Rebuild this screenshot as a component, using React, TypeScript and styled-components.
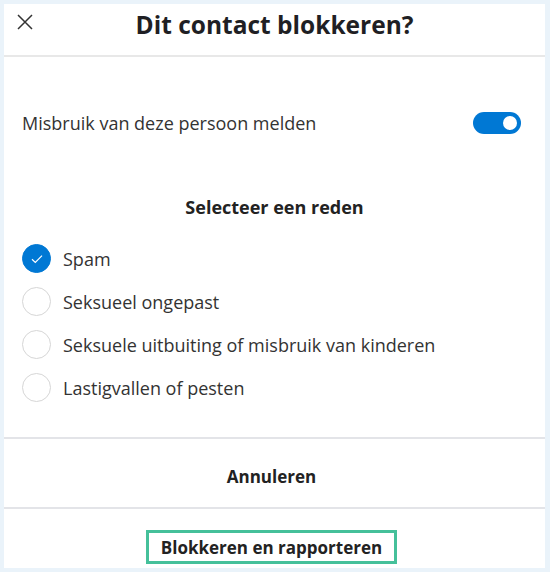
import styled, { createGlobalStyle } from "styled-components";

const GlobalStyle = createGlobalStyle`
  body {
    margin: 0;
    background: #eaf3fa;
    font-family: "Open Sans", "Noto Sans", Arial, sans-serif;
  }
`;

const reasons = [
  "Spam",
  "Seksueel ongepast",
  "Seksuele uitbuiting of misbruik van kinderen",
  "Lastigvallen of pesten",
];

const App = () => {
  return (
    <>
      <GlobalStyle />
      <Panel>
        <Header>
          <Close aria-label="Sluiten">
            <svg width="16" height="16" viewBox="0 0 16 16">
              <path d="M1 1 L15 15 M15 1 L1 15" stroke="#333" strokeWidth="1.5" fill="none" />
            </svg>
          </Close>
          <Title>Dit contact blokkeren?</Title>
        </Header>
        <Body>
          <ToggleRow>
            <Label>Misbruik van deze persoon melden</Label>
            <Switch $on />
          </ToggleRow>
          <SectionTitle>Selecteer een reden</SectionTitle>
          <List>
            {reasons.map((r, i) => (
              <Option key={r}>
                <Radio $checked={i === 0}>
                  {i === 0 && (
                    <svg width="12" height="10" viewBox="0 0 12 10">
                      <path d="M1 5.2 L4.3 8.4 L11 1.6" stroke="#fff" strokeWidth="1.2" fill="none" />
                    </svg>
                  )}
                </Radio>
                <Label>{r}</Label>
              </Option>
            ))}
          </List>
        </Body>
        <Action>
          <ActionText>Annuleren</ActionText>
        </Action>
        <Footer>
          <Primary>Blokkeren en rapporteren</Primary>
        </Footer>
      </Panel>
    </>
  );
};

export default App;

const Panel = styled.div`
  margin: 4px 5px 4px 4px;
  height: 564px;
  background: #fff;
  display: flex;
  flex-direction: column;
`;
const Header = styled.div`
  height: 51px;
  border-bottom: 2px solid #e8e8e8;
  display: flex;
  align-items: center;
  justify-content: center;
  position: relative;
`;
const Close = styled.div`
  position: absolute;
  left: 13px;
  top: 10px;
  width: 16px;
  height: 16px;
  display: flex;
`;
const Title = styled.div`
  font-size: 24.5px;
  font-weight: 700;
  color: #1f1f24;
  margin-top: -10px;
`;
const Body = styled.div`
  flex: 1;
  padding: 50px 24px 0 18px;
  border-bottom: 2px solid #e3e4e8;
`;
const ToggleRow = styled.div`
  display: flex;
  align-items: center;
  justify-content: space-between;
  height: 32px;
`;
const Label = styled.span`
  font-size: 18px;
  color: #333;
`;
const Switch = styled.div<{ $on?: boolean }>`
  width: 48px;
  height: 22px;
  border-radius: 11px;
  background: ${(p) => (p.$on ? "#0078d4" : "#ccc")};
  position: relative;
  &::after {
    content: "";
    position: absolute;
    top: 4px;
    left: ${(p) => (p.$on ? "30px" : "4px")};
    width: 14px;
    height: 14px;
    border-radius: 50%;
    background: #fff;
  }
`;
const SectionTitle = styled.div`
  margin: 56px 0 0 6px;
  text-align: center;
  font-size: 18px;
  font-weight: 700;
  color: #222;
`;
const List = styled.div`
  margin-top: 25px;
  display: flex;
  flex-direction: column;
  gap: 14px;
`;
const Option = styled.div`
  display: flex;
  align-items: center;
  gap: 12px;
  height: 29px;
`;
const Radio = styled.div<{ $checked?: boolean }>`
  width: 29px;
  height: 29px;
  box-sizing: border-box;
  border-radius: 50%;
  border: 1px solid ${(p) => (p.$checked ? "#0078d4" : "#d6d6d6")};
  background: ${(p) => (p.$checked ? "#0078d4" : "#fff")};
  display: flex;
  align-items: center;
  justify-content: center;
`;
const Action = styled.div`
  height: 70px;
  border-bottom: 2px solid #e3e4e8;
  display: flex;
  align-items: center;
  justify-content: center;
  padding: 6px 6px 0 0;
  box-sizing: border-box;
`;
const ActionText = styled.div`
  font-size: 17px;
  font-weight: 700;
  color: #222;
`;
const Footer = styled.div`
  height: 59px;
  display: flex;
  justify-content: center;
  align-items: flex-start;
  padding: 21px 6px 0 0;
  box-sizing: border-box;
`;
const Primary = styled.div`
  width: 251px;
  height: 34px;
  box-sizing: border-box;
  border: 3px solid #45c09a;
  display: flex;
  align-items: center;
  justify-content: center;
  font-size: 17px;
  font-weight: 700;
  color: #222;
`;
